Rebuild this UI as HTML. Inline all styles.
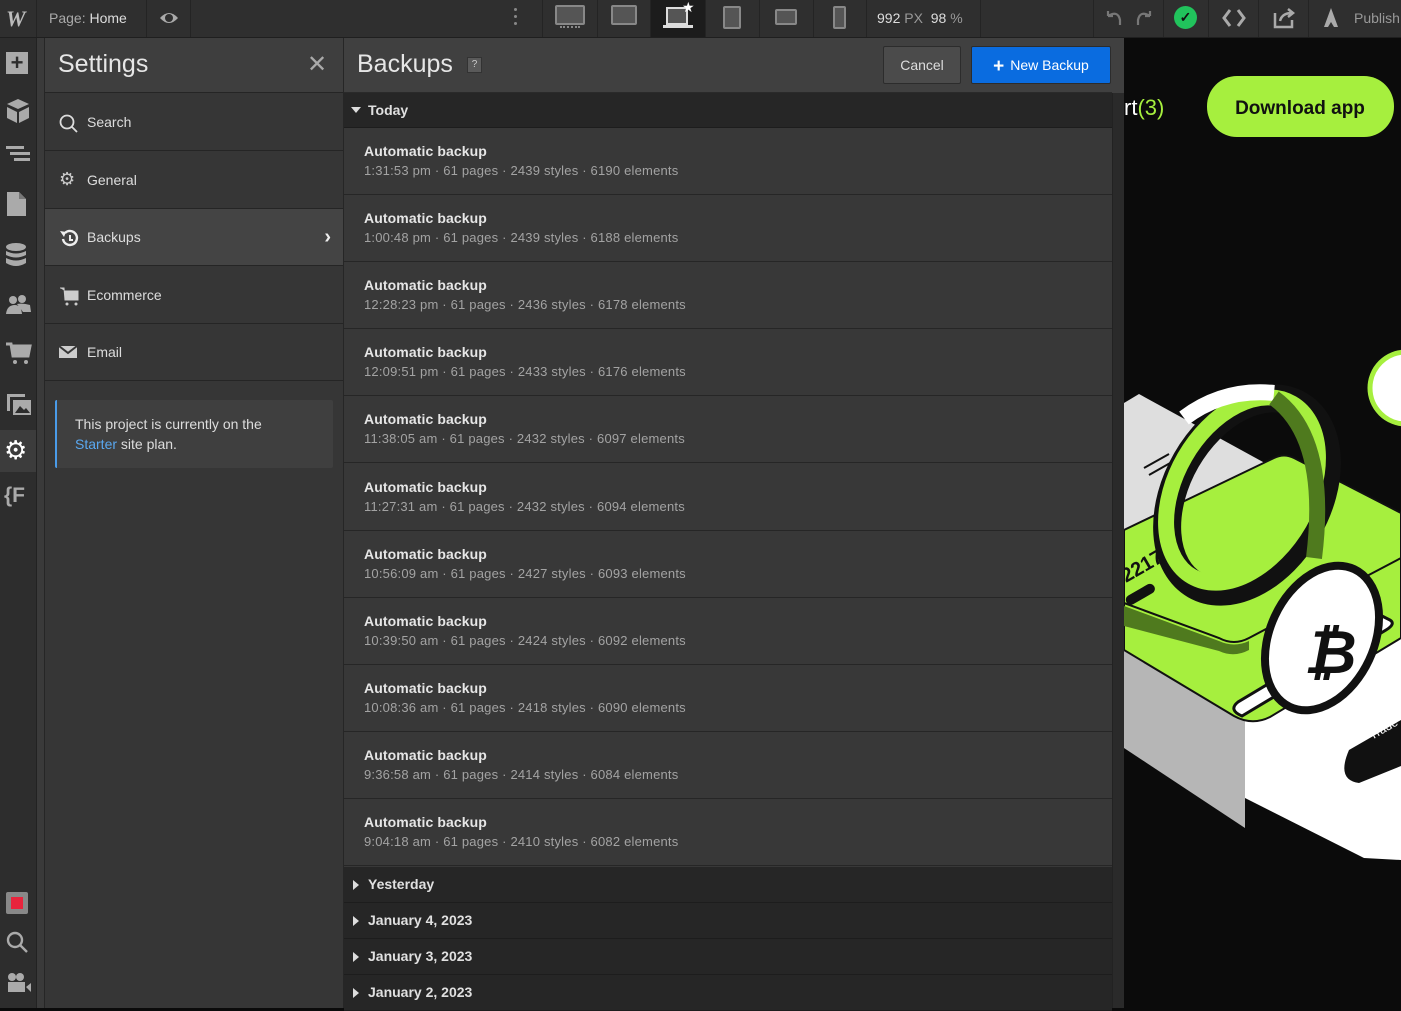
<!DOCTYPE html>
<html><head><meta charset="utf-8"><style>
*{box-sizing:border-box;margin:0;padding:0}
body{width:1401px;height:1008px;overflow:hidden;background:#0b0b0b;font-family:"Liberation Sans",Arial,sans-serif;position:relative;color:#e0e0e0}
.abs{position:absolute}
#top{left:0;top:0;width:1401px;height:38px;background:#2f2f2f;border-bottom:1px solid #1f1f1f}
.sep{position:absolute;top:0;width:1px;height:37px;background:#242424}
#rail{left:0;top:38px;width:37px;height:970px;background:#2d2d2d;border-right:1px solid #222}
#strip{left:37px;top:38px;width:8px;height:970px;background:#3a3a3a;border-right:1px solid #262626}
#set{left:45px;top:38px;width:299px;height:970px;background:#363636;border-right:1px solid #262626}
.mi{position:absolute;left:0;width:298px;height:57px;border-bottom:1px solid #252525;font-size:14px;color:#ddd;padding-left:42px;line-height:56px}
.mi svg{position:absolute;left:14px;top:20px}
#bk{left:344px;top:38px;width:768px;height:970px;background:#383838}
.row{position:absolute;left:0;width:768px;height:67px;border-bottom:1px solid #262626;padding:15px 0 0 20px}
.row b{display:block;font-size:14px;color:#e6e6e6;font-weight:bold;letter-spacing:.1px}
.row span{display:block;font-size:13px;color:#a3a3a3;margin-top:4px;letter-spacing:.2px}
.grp{position:absolute;left:0;width:768px;height:36px;background:#262626;border-bottom:1px solid #1d1d1d;font-size:14px;font-weight:bold;color:#e0e0e0;padding-left:24px;line-height:35px}
.grp i{position:absolute;left:9px;top:13px;width:0;height:0;border-top:5px solid transparent;border-bottom:5px solid transparent;border-left:6px solid #ddd}
.ri{position:absolute;left:6px}
</style></head><body>
<div id="top" class="abs">
 <div class="abs" style="left:6px;top:6px;font:italic bold 22px 'Liberation Serif',serif;color:#bbb">W</div>
 <div class="sep" style="left:36px"></div>
 <div class="abs" style="left:49px;top:10px;font-size:14px;color:#aaa">Page: <span style="color:#ddd">Home</span></div>
 <div class="sep" style="left:146px"></div>
 <svg class="abs" style="left:159px;top:9px" width="20" height="18"><path d="M1 9 Q10 -1 19 9 Q10 19 1 9Z" fill="#aaa"/><circle cx="10" cy="9" r="4" fill="#2f2f2f"/></svg>
 <div class="sep" style="left:190px"></div>
 <div class="abs" style="left:514px;top:8px;width:3px;height:3px;background:#888;border-radius:2px;box-shadow:0 7px 0 #888,0 14px 0 #888"></div>
 <div class="sep" style="left:542px"></div>
 <div class="abs" style="left:555px;top:5px;width:30px;height:20px;background:#555;border:2px solid #888;border-radius:2px"></div>
 <div class="abs" style="left:560px;top:26px;width:20px;height:2px;border-top:2px dotted #888"></div>
 <div class="sep" style="left:597px"></div>
 <div class="abs" style="left:611px;top:5px;width:26px;height:20px;background:#555;border:2px solid #888;border-radius:2px"></div>
 <div class="sep" style="left:650px"></div>
 <div class="abs" style="left:651px;top:0;width:54px;height:37px;background:#1c1c1c"></div>
 <div class="abs" style="left:666px;top:7px;width:22px;height:18px;background:#555;border:2px solid #ddd"></div>
 <div class="abs" style="left:663px;top:25px;width:30px;height:3px;background:#ddd"></div>
 <div class="abs" style="left:682px;top:-1px;font-size:14px;color:#fff">★</div>
 <div class="sep" style="left:705px"></div>
 <div class="abs" style="left:723px;top:6px;width:18px;height:23px;background:#555;border:2px solid #888;border-radius:2px"></div>
 <div class="sep" style="left:759px"></div>
 <div class="abs" style="left:775px;top:9px;width:22px;height:16px;background:#555;border:2px solid #888;border-radius:2px"></div>
 <div class="sep" style="left:813px"></div>
 <div class="abs" style="left:833px;top:6px;width:13px;height:23px;background:#555;border:2px solid #888;border-radius:2px"></div>
 <div class="sep" style="left:866px"></div>
 <div class="abs" style="left:877px;top:10px;font-size:14px;color:#ddd">992 <span style="color:#999">PX</span>&nbsp; 98 <span style="color:#999">%</span></div>
 <div class="sep" style="left:980px"></div>
 <div class="sep" style="left:1093px"></div>
 <svg class="abs" style="left:1104px;top:8px" width="50" height="20"><path d="M4 8Q14 2 16 12V17M4 8V3M4 8H9" stroke="#777" stroke-width="2.2" fill="none"/><path d="M46 8Q36 2 34 12V17M46 8V3M46 8H41" stroke="#777" stroke-width="2.2" fill="none"/></svg>
 <div class="sep" style="left:1163px"></div>
 <div class="abs" style="left:1174px;top:6px;width:23px;height:23px;border-radius:12px;background:#21c35c;color:#111;font-size:14px;font-weight:bold;text-align:center;line-height:23px">✓</div>
 <div class="sep" style="left:1208px"></div>
 <svg class="abs" style="left:1221px;top:8px" width="26" height="20"><path d="M9 2L3 10L9 18M17 2L23 10L17 18" stroke="#aaa" stroke-width="3" fill="none"/></svg>
 <div class="sep" style="left:1258px"></div>
 <svg class="abs" style="left:1272px;top:7px" width="24" height="22"><path d="M3 6V20H20V13M8 14Q10 6 20 6M16 2L21 6L16 10" stroke="#aaa" stroke-width="2.5" fill="none"/></svg>
 <div class="sep" style="left:1308px"></div>
 <svg class="abs" style="left:1321px;top:7px" width="20" height="22"><path d="M10 1L17 20H13L10 15L7 20H3Z" fill="#aaa"/></svg>
 <div class="abs" style="left:1354px;top:10px;font-size:14px;color:#999">Publish</div>
</div>

<div id="rail" class="abs">
 <div class="ri" style="top:14px;width:22px;height:22px;background:#aaa;color:#2d2d2d;font-size:22px;font-weight:bold;text-align:center;line-height:21px">+</div>
 <svg class="ri" style="top:60px" width="24" height="26"><path d="M12 1L23 6L12 11L1 6Z M1 9L11 14V25L1 20Z M13 14L23 9V20L13 25Z" fill="#aaa"/></svg>
 <svg class="ri" style="top:108px" width="24" height="20"><rect x="0" y="0" width="18" height="3" fill="#aaa"/><rect x="4" y="6" width="20" height="3" fill="#aaa"/><rect x="8" y="12" width="16" height="3" fill="#aaa"/></svg>
 <svg class="ri" style="top:153px" width="22" height="26"><path d="M1 1H13L20 8V25H1Z" fill="#aaa"/><path d="M13 1V8H20" fill="#777"/></svg>
 <svg class="ri" style="top:205px" width="22" height="26"><ellipse cx="10" cy="4" rx="10" ry="4" fill="#aaa"/><path d="M0 8Q10 13 20 8V12Q10 17 0 12Z M0 15Q10 20 20 15V20Q10 26 0 20Z" fill="#aaa"/></svg>
 <svg class="ri" style="top:256px" width="26" height="22"><circle cx="7" cy="6" r="4" fill="#aaa"/><circle cx="16" cy="5" r="4" fill="#aaa"/><path d="M0 20Q1 11 9 11Q15 11 16 20Z M11 10Q17 9 24 11L25 18H17Z" fill="#aaa"/></svg>
 <svg class="ri" style="top:304px" width="26" height="24"><path d="M0 2H5L7 14H22L24 4H6" stroke="#aaa" stroke-width="3" fill="#aaa"/><circle cx="9" cy="20" r="2" fill="#aaa"/><circle cx="20" cy="20" r="2" fill="#aaa"/></svg>
 <svg class="ri" style="top:355px" width="26" height="24"><path d="M1 1H19V4H4V18H1Z" fill="#aaa"/><rect x="7" y="7" width="18" height="15" fill="#aaa"/><path d="M9 20L14 13L18 17L20 15L24 20Z" fill="#2d2d2d"/></svg>
 <div class="abs" style="left:0;top:392px;width:36px;height:42px;background:#3c3c3c"></div>
 <div class="abs" style="left:4px;top:399px;font-size:26px;color:#fff;line-height:26px">⚙</div>
 <div class="abs" style="left:4px;top:446px;font-size:21px;font-weight:bold;color:#aaa">{F</div>
 <div class="ri" style="top:854px;width:22px;height:22px;background:#888;border-radius:2px"><div style="margin:5px;width:12px;height:12px;background:#e8243c"></div></div>
 <svg class="ri" style="top:893px" width="22" height="22"><circle cx="9" cy="9" r="7" stroke="#aaa" stroke-width="2.4" fill="none"/><path d="M14 14L21 21" stroke="#aaa" stroke-width="2.4"/></svg>
 <svg class="ri" style="top:935px" width="26" height="20"><circle cx="6" cy="4" r="4" fill="#aaa"/><circle cx="14" cy="4" r="4" fill="#aaa"/><rect x="2" y="9" width="17" height="10" fill="#aaa"/><path d="M20 14L25 10V19Z" fill="#aaa"/></svg>
</div>
<div id="strip" class="abs"></div>

<div id="set" class="abs">
 <div class="abs" style="left:0;top:0;width:298px;height:55px;background:#3e3e3e;border-bottom:1px solid #252525"></div>
 <div class="abs" style="left:13px;top:12px;font-size:25px;color:#e6e6e6">Settings</div>
 <div class="abs" style="left:262px;top:12px;font-size:24px;color:#aaa">✕</div>
 <div class="mi" style="top:56px"><svg width="20" height="20"><circle cx="8" cy="8" r="6.5" stroke="#ddd" stroke-width="1.8" fill="none"/><path d="M13 13L18 18" stroke="#ddd" stroke-width="1.8"/></svg>Search</div>
 <div class="mi" style="top:114px"><span style="position:absolute;left:14px;top:-1px;font-size:18px;color:#ccc">⚙</span>General</div>
 <div class="mi" style="top:171px;background:#444"><svg width="20" height="20"><path d="M4 10A7 7 0 1 0 6 4" stroke="#eee" stroke-width="2.4" fill="none"/><path d="M1 2L7 3L5 8Z" fill="#eee"/><path d="M11 6V11H14" stroke="#eee" stroke-width="2" fill="none"/></svg>Backups<span style="position:absolute;right:12px;top:0;font-size:20px;color:#eee;font-weight:bold">›</span></div>
 <div class="mi" style="top:229px"><svg width="22" height="20"><path d="M1 1H5L6 13H19V4H6" fill="#ccc" stroke="#ccc" stroke-width="1"/><circle cx="8" cy="17" r="1.5" fill="#ccc"/><circle cx="17" cy="17" r="1.5" fill="#ccc"/></svg>Ecommerce</div>
 <div class="mi" style="top:286px"><svg width="20" height="16"><path d="M0 2H18V14H0Z" fill="#ccc"/><path d="M0 2L9 9L18 2" stroke="#363636" stroke-width="2" fill="none"/></svg>Email</div>
 <div class="abs" style="left:10px;top:362px;width:278px;height:68px;background:#3f3f3f;border-left:2px solid #4a9be8;border-radius:2px;padding:14px 0 0 18px;font-size:14px;line-height:20px;color:#ddd">This project is currently on the<br><span style="color:#5aa8f0">Starter</span> site plan.</div>
</div>

<div id="bk" class="abs">
 <div class="abs" style="left:0;top:0;width:768px;height:55px;background:#404040;border-bottom:1px solid #2a2a2a"></div>
 <div class="abs" style="left:13px;top:12px;font-size:25px;color:#e6e6e6">Backups</div>
 <div class="abs" style="left:123px;top:19px;width:15px;height:16px;background:#5a5a5a;border:1px solid #333;font-size:10px;color:#ccc;text-align:center;line-height:14px">?</div>
 <div class="abs" style="left:539px;top:8px;width:78px;height:38px;background:#4b4b4b;border:1px solid #2c2c2c;border-radius:2px;font-size:14px;color:#ddd;text-align:center;line-height:36px">Cancel</div>
 <div class="abs" style="left:627px;top:8px;width:140px;height:38px;background:#0a6ce0;border:1px solid #2c2c2c;border-radius:2px;font-size:14px;color:#fff;text-align:center;line-height:36px"><b style="font-size:19px;vertical-align:-2px;margin-right:6px">+</b>New Backup</div>
 <div class="grp" style="top:55px;height:35px;background:#262626"><i style="left:7px;top:14px;border-left:5px solid transparent;border-right:5px solid transparent;border-top:6px solid #ddd;border-bottom:0"></i>Today</div>
 <div class="row" style="top:90px"><b>Automatic backup</b><span>1:31:53 pm · 61 pages · 2439 styles · 6190 elements</span></div>
 <div class="row" style="top:157px"><b>Automatic backup</b><span>1:00:48 pm · 61 pages · 2439 styles · 6188 elements</span></div>
 <div class="row" style="top:224px"><b>Automatic backup</b><span>12:28:23 pm · 61 pages · 2436 styles · 6178 elements</span></div>
 <div class="row" style="top:291px"><b>Automatic backup</b><span>12:09:51 pm · 61 pages · 2433 styles · 6176 elements</span></div>
 <div class="row" style="top:358px"><b>Automatic backup</b><span>11:38:05 am · 61 pages · 2432 styles · 6097 elements</span></div>
 <div class="row" style="top:426px"><b>Automatic backup</b><span>11:27:31 am · 61 pages · 2432 styles · 6094 elements</span></div>
 <div class="row" style="top:493px"><b>Automatic backup</b><span>10:56:09 am · 61 pages · 2427 styles · 6093 elements</span></div>
 <div class="row" style="top:560px"><b>Automatic backup</b><span>10:39:50 am · 61 pages · 2424 styles · 6092 elements</span></div>
 <div class="row" style="top:627px"><b>Automatic backup</b><span>10:08:36 am · 61 pages · 2418 styles · 6090 elements</span></div>
 <div class="row" style="top:694px"><b>Automatic backup</b><span>9:36:58 am · 61 pages · 2414 styles · 6084 elements</span></div>
 <div class="row" style="top:761px"><b>Automatic backup</b><span>9:04:18 am · 61 pages · 2410 styles · 6082 elements</span></div>
 <div class="grp" style="top:829px"><i></i>Yesterday</div>
 <div class="grp" style="top:865px"><i></i>January 4, 2023</div>
 <div class="grp" style="top:901px"><i></i>January 3, 2023</div>
 <div class="grp" style="top:937px"><i></i>January 2, 2023</div>
</div>
<div class="abs" style="left:1112px;top:93px;width:12px;height:915px;background:#2a2a2a;border-left:1px solid #222"></div>
<div class="abs" style="left:1112px;top:38px;width:12px;height:55px;background:#404040"></div>

<svg class="abs" style="left:1124px;top:38px" width="277" height="970">
 <text x="0" y="77" font-family="Liberation Sans" font-size="22" fill="#fff">rt<tspan fill="#a6ef3e">(3)</tspan></text>
 <rect x="83" y="38" width="187" height="61" rx="30" fill="#a6ef3e"/>
 <text x="176" y="76" text-anchor="middle" font-family="Liberation Sans" font-weight="bold" font-size="19" fill="#111">Download app</text>
 <circle cx="282" cy="350" r="36" fill="#fff" stroke="#a6ef3e" stroke-width="5"/>
 <path d="M0 365L15 356L150 430L0 520Z" fill="#dedede"/>
 <path d="M20 430L45 416M25 437L55 420" stroke="#111" stroke-width="2"/>
 <path d="M0 600L121 680L121 790L0 710Z" fill="#b6b6b6"/>
 <path d="M121 680L277 580V822L240 820L121 760Z" fill="#fff"/>
 <path d="M0 560L277 520V600L146 679Q128 688 110 678L0 612Z" fill="#a6ef3e" stroke="#111" stroke-width="2"/>
 <path d="M0 492L150 420Q160 415 170 420L277 475V520L125 600Q110 608 95 600L0 565Z" fill="#a6ef3e" stroke="#111" stroke-width="2"/>
 <path d="M0 568L95 603Q110 610 125 603L125 612Q110 620 95 613L0 588Z" fill="#4f7a1e"/>
 <ellipse cx="123" cy="457" rx="70" ry="104" transform="rotate(30 123 457)" fill="none" stroke="#111" stroke-width="28"/>
 <ellipse cx="118" cy="452" rx="66" ry="100" transform="rotate(30 118 452)" fill="none" stroke="#a6ef3e" stroke-width="16"/>
 <path d="M60 380Q100 350 150 355" stroke="#fff" stroke-width="16" fill="none"/>
 <path d="M150 360Q205 400 190 520" stroke="#4f7a1e" stroke-width="16" fill="none"/>
 <text x="2" y="545" transform="rotate(-30 2 545)" font-family="Liberation Sans" font-weight="bold" font-size="20" fill="#111">2217</text>
 <rect x="0" y="560" width="32" height="10" rx="5" transform="rotate(-30 0 560)" fill="#111"/>
 <path d="M118 678L262 592Q272 586 266 582L258 578L114 664Q104 672 118 678Z" fill="#fff" stroke="#111" stroke-width="3"/>
 <ellipse cx="198" cy="600" rx="52" ry="76" transform="rotate(25 198 600)" fill="#fff" stroke="#111" stroke-width="8"/>
 <text x="180" y="635" font-family="Liberation Sans" font-weight="bold" font-style="italic" font-size="60" fill="#111">₿</text>
 <path d="M225 712L277 682V728L235 745Q212 742 225 712Z" fill="#111"/>
 <text x="248" y="702" transform="rotate(-30 248 702)" font-family="Liberation Sans" font-size="12" fill="#fff">Trade</text>
</svg>
</body></html>
